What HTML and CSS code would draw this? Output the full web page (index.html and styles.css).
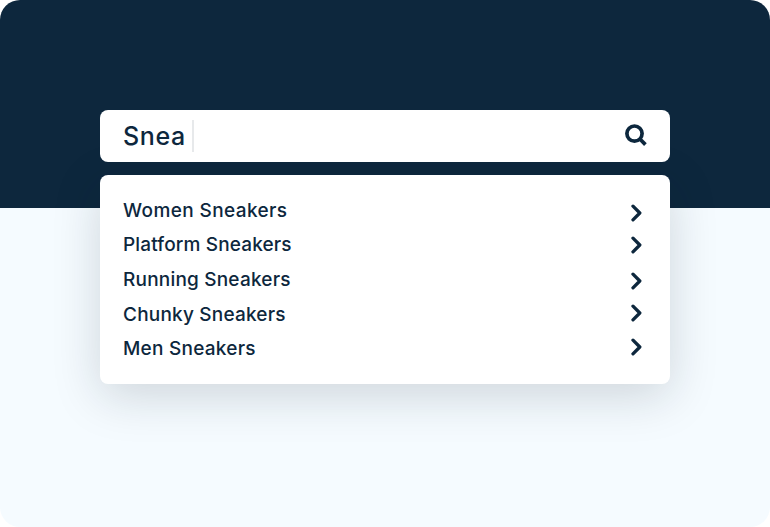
FILE: index.html
```html
<!DOCTYPE html>
<html lang="en">
<head>
<meta charset="utf-8">
<title>Search suggestions</title>
<link rel="stylesheet" href="styles.css">
</head>
<body>
<main class="stage">
  <div class="search">
    <span class="query">Snea</span><span class="caret"></span>
    <svg class="glass" width="24" height="24" viewBox="0 0 24 24"><circle cx="10.5" cy="9.6" r="7.6"/><path d="M15.7 14.8L21.4 20.6"/></svg>
  </div>
  <ul class="list">
    <li class="item"><span class="label women">Women Sneakers</span><svg class="chev low" width="12" height="18" viewBox="0 0 12 18"><path d="M2 2.2L8.8 9L2 15.8"/></svg></li>
    <li class="item"><span class="label platform">Platform Sneakers</span><svg class="chev" width="12" height="18" viewBox="0 0 12 18"><path d="M2 2.2L8.8 9L2 15.8"/></svg></li>
    <li class="item"><span class="label running">Running Sneakers</span><svg class="chev mid" width="12" height="18" viewBox="0 0 12 18"><path d="M2 2.2L8.8 9L2 15.8"/></svg></li>
    <li class="item"><span class="label chunky">Chunky Sneakers</span><svg class="chev high" width="12" height="18" viewBox="0 0 12 18"><path d="M2 2.2L8.8 9L2 15.8"/></svg></li>
    <li class="item"><span class="label men">Men Sneakers</span><svg class="chev high" width="12" height="18" viewBox="0 0 12 18"><path d="M2 2.2L8.8 9L2 15.8"/></svg></li>
  </ul>
</main>
</body>
</html>
```
FILE: styles.css
```css
* { box-sizing: border-box; }
body { margin: 0; background: #fff; }
.stage {
  width: 770px;
  height: 527px;
  padding: 110px 100px 0;
  border-radius: 20px;
  overflow: hidden;
  background: linear-gradient(#0d273d 208px, #f5fbff 208px);
  color: #0d273d;
  font-family: Inter, "Liberation Sans", sans-serif;
  font-weight: 500;
}
.search {
  position: relative;
  z-index: 1;
  display: flex;
  align-items: center;
  height: 52px;
  padding: 0 22px 0 23px;
  border-radius: 8px;
  background: #fff;
}
.query { width: 69px; font-size: 25px; line-height: 52px; letter-spacing: 0.6px; }
.caret { width: 2px; height: 32px; background: #e7e9eb; }
.glass { margin-left: auto; fill: none; stroke: #0d273d; stroke-width: 3.7; }
.list {
  height: 209px;
  margin: 13px 0 0;
  padding: 19px 27px 0 23px;
  list-style: none;
  border-radius: 8px;
  background: #fff;
  box-shadow: 0 12px 48px rgba(16, 32, 40, 0.17);
}
.item {
  display: flex;
  align-items: center;
  justify-content: space-between;
  height: 34.45px;
}
.label { font-size: 19px; line-height: 34px; white-space: nowrap; }
.women { letter-spacing: 0.4px; }
.platform { margin-top: -1px; letter-spacing: 0.15px; }
.running { letter-spacing: 0.2px; }
.chunky { letter-spacing: 0.2px; }
.men { letter-spacing: 0.25px; }
.chev { margin-bottom: 1px; fill: none; stroke: #0d273d; stroke-width: 3.3; stroke-linecap: round; stroke-linejoin: round; }
.low { margin: 3px 0 0; }
.mid { margin: 1px 0 0; }
.high { margin-bottom: 3px; }
```
